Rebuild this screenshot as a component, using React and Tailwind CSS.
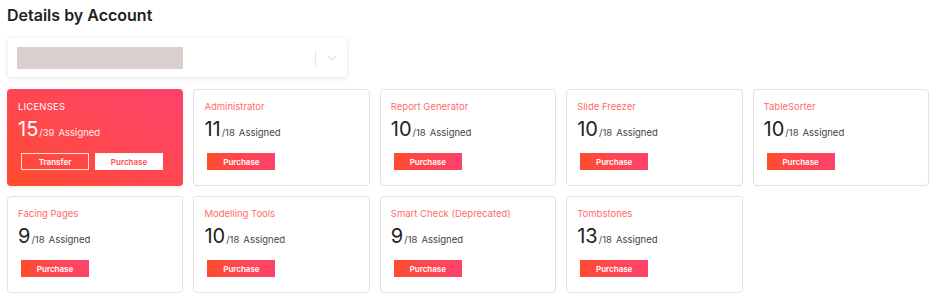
import { ChevronDown } from 'lucide-react';

const products = [
    { name: 'Administrator', used: 11, total: 18 },
    { name: 'Report Generator', used: 10, total: 18 },
    { name: 'Slide Freezer', used: 10, total: 18 },
    { name: 'TableSorter', used: 10, total: 18 },
    { name: 'Facing Pages', used: 9, total: 18 },
    { name: 'Modelling Tools', used: 10, total: 18 },
    { name: 'Smart Check (Deprecated)', used: 9, total: 18 },
    { name: 'Tombstones', used: 13, total: 18 },
];

function Count({ used, total, light }) {
    return (
        <div className="flex items-baseline h-[20px] mt-[6px]">
            <span className={`text-[20px] leading-none ${light ? 'text-white' : 'text-[#222]'}`}>{used}</span>
            <span className={`text-[9.5px] leading-none ml-[1px] ${light ? 'text-white/90' : 'text-[#444]'}`}>/{total}</span>
            <span className={`text-[9.5px] leading-none ml-[4px] ${light ? 'text-white/90' : 'text-[#444]'}`}>Assigned</span>
        </div>
    );
}

export default function App() {
    return (
        <div className="bg-white w-[936px] h-[300px] px-[7px] pt-[4px] font-['Inter',sans-serif]">
            <h1 className="text-[16px] font-semibold text-[#222] leading-[22px]">Details by Account</h1>

            <div className="mt-[12px] ml-[1px] w-[339px] h-[39px] bg-white rounded-[3px] shadow-[0_1px_5px_rgba(0,0,0,0.12)] flex items-center pl-[9px]">
                <div className="w-[166px] h-[22px] bg-[#d9cfcc]"></div>
                <div className="ml-auto h-[16px] w-px bg-[#e6e6e6]"></div>
                <div className="w-[31px] flex justify-center">
                    <ChevronDown size={14} strokeWidth={1.1} className="text-[#b0b0b0]" />
                </div>
            </div>

            <div className="grid grid-cols-5 gap-x-[10px] gap-y-[10px] mt-[12px] w-[922px]">
                <div className="h-[97px] rounded-[4px] bg-linear-to-tr from-[#ff4b2b] to-[#ff416c] px-[11px] pt-[12px] shadow-[0_1px_2px_rgba(0,0,0,0.08)]">
                    <div className="text-[9.5px] text-white tracking-[0.2px] leading-[12px]">LICENSES</div>
                    <Count used={15} total={39} light />
                    <div className="flex gap-[6px] mt-[14px] ml-[3px]">
                        <button className="w-[68px] h-[17px] border border-white/80 text-white text-[8px] font-semibold">Transfer</button>
                        <button className="w-[68px] h-[17px] bg-white text-[#ff4b4b] text-[8px] font-semibold">Purchase</button>
                    </div>
                </div>
                {products.map((p) => (
                    <div key={p.name} className="h-[97px] rounded-[4px] border-[1.5px] border-[#e2e2e2] px-[10px] pt-[11px]">
                        <div className="text-[9.5px] text-[#ff6b6b] leading-[12px]">{p.name}</div>
                        <Count used={p.used} total={p.total} />
                        <div className="flex mt-[14px] ml-[3px]">
                            <button className="w-[68px] h-[17px] bg-linear-to-r from-[#ff4b2b] to-[#ff416c] text-white text-[8px] font-semibold">Purchase</button>
                        </div>
                    </div>
                ))}
            </div>
        </div>
    );
}
